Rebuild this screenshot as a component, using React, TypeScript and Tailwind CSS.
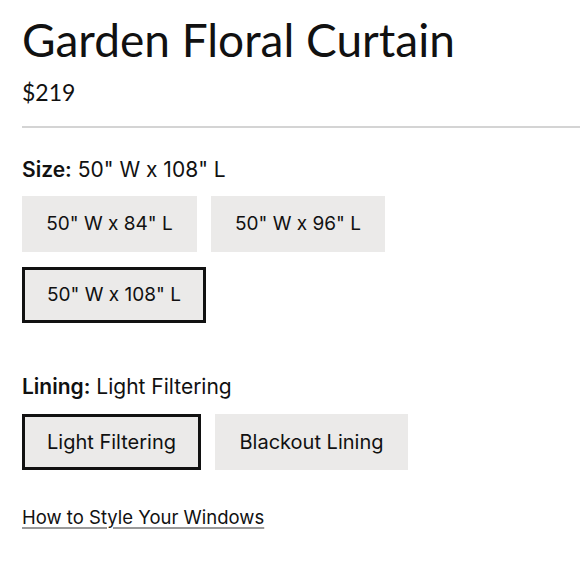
import React from "react";

const titleFont = { fontFamily: "Lato, 'Noto Sans', sans-serif" };
const bodyFont = { fontFamily: "Inter, 'Noto Sans', sans-serif" };

function Opt({ label, selected, w, size }: { label: string; selected?: boolean; w: string; size: string }) {
  return (
    <div
      className={`${w} ${size} h-[56px] flex items-center justify-center bg-[#ebeae9] text-[#111] ${
        selected ? "border-[3px] border-[#111]" : ""
      }`}
    >
      {label}
    </div>
  );
}

export default function App() {
  return (
    <div className="w-[580px] h-[580px] bg-white text-[#111] pl-[22px]" style={bodyFont}>
      <h1 className="text-[46px] leading-[46px] pt-[17px] font-normal" style={titleFont}>Garden Floral Curtain</h1>
      <div className="text-[23px] leading-[23px] mt-[18px]" style={titleFont}>$219</div>
      <div className="h-[2px] bg-[#d4d4d4] mt-[22px]" />
      <div className="mt-[32px] text-[21px] leading-[20px]">
        <span className="font-semibold">Size:</span> 50" W x 108" L
      </div>
      <div className="mt-[16px] flex flex-wrap gap-x-[14px] gap-y-[15px] w-[400px]">
        <Opt label={'50" W x 84" L'} w="w-[175px]" size="text-[19px]" />
        <Opt label={'50" W x 96" L'} w="w-[174px]" size="text-[19px]" />
        <Opt label={'50" W x 108" L'} selected w="w-[184px]" size="text-[19px]" />
      </div>
      <div className="mt-[54px] text-[21px] leading-[20px]">
        <span className="font-semibold">Lining:</span> Light Filtering
      </div>
      <div className="mt-[17px] flex gap-x-[14px]">
        <Opt label="Light Filtering" selected w="w-[179px]" size="text-[20px]" />
        <Opt label="Blackout Lining" w="w-[193px]" size="text-[20px]" />
      </div>
      <div className="mt-[36px]">
        <a className="text-[18.5px] leading-[22px] underline decoration-[#999] decoration-2 underline-offset-[3px]">How to Style Your Windows</a>
      </div>
    </div>
  );
}
